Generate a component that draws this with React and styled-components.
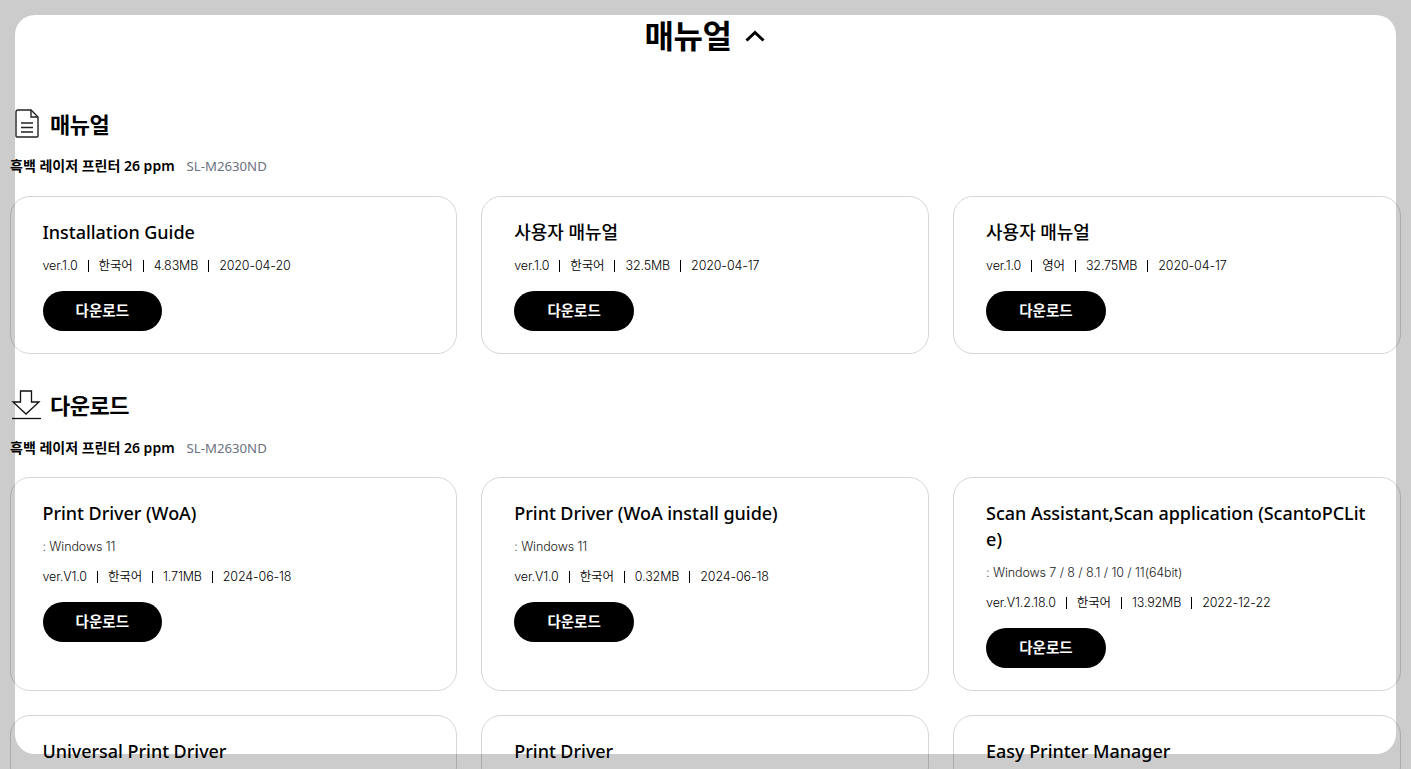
import React from "react";
import styled, { createGlobalStyle } from "styled-components";

const FONT = `"Noto Sans", "Noto Sans CJK KR", sans-serif`;
const LIGHT_FONT = `Inter, "Noto Sans CJK KR", sans-serif`;

const GlobalStyle = createGlobalStyle`
  html, body {
    margin: 0;
    height: 769px;
    overflow: hidden;
    background-color: #cccccc;
    font-family: ${FONT};
    color: #000;
  }
`;

// styled elements
const Panel = styled.div`
  height: 739px;
  margin: 15px;
  background-color: #fff;
  border-radius: 20px;
`;
const PageTitle = styled.h1`
  height: 42px;
  margin: 0;
  padding-right: 2px;
  display: flex;
  justify-content: center;
  align-items: center;
  gap: 13px;
  font-size: 32px;
  line-height: 42px;
  font-weight: 700;
  letter-spacing: -0.4px;
`;
const Content = styled.div`
  margin: 52px -4.9px 0 -5.5px;
`;
const Section = styled.section`
  margin-bottom: 36.3px;
`;
const SectionHead = styled.div`
  height: 30px;
  display: flex;
  align-items: center;
  gap: 9px;
  padding-left: 1.5px;
`;
const IconBox = styled.span`
  width: 30px;
  height: 30px;
  display: flex;
  justify-content: center;
  padding-left: ${(p) => p.$shift || 0}px;
  box-sizing: border-box;
`;
const SectionTitle = styled.h2`
  margin: 0;
  font-size: 22px;
  line-height: 30px;
  font-weight: 700;
  letter-spacing: -0.5px;
`;
const ModelLine = styled.div`
  height: 20px;
  margin: 17.3px 0 19.7px 0.5px;
  display: flex;
  align-items: center;
  gap: 12px;
  font-size: 14px;
  line-height: 20px;
`;
const ModelName = styled.strong`
  font-weight: 600;
`;
const ModelCode = styled.span`
  font-size: 13.2px;
  color: #6c7280;
`;
const CardGrid = styled.div`
  display: grid;
  grid-template-columns: repeat(3, 1fr);
  gap: 24px;
`;
const Card = styled.div`
  padding: 22px 32px;
  border: 1px solid rgba(0, 0, 0, 0.16);
  border-radius: 20px;
`;
const CardTitle = styled.h3`
  margin: 0;
  font-size: 18px;
  line-height: 26px;
  font-weight: 500;
  letter-spacing: -0.04px;
  word-break: break-all;
`;
const OsLine = styled.p`
  height: 20px;
  margin: 10px 0 0 0;
  font-family: ${LIGHT_FONT};
  font-size: 12.5px;
  font-weight: 350;
  line-height: 22px;
  letter-spacing: -0.1px;
  color: #222;
`;
const MetaRow = styled.ul`
  height: 20px;
  box-sizing: border-box;
  margin: 10px 0 0 0;
  padding: 1.6px 0 0 0;
  list-style: none;
  display: flex;
  align-items: center;
  font-family: ${LIGHT_FONT};
  font-size: 12.5px;
  font-weight: 350;
  line-height: 18px;
  letter-spacing: -0.13px;
`;
const MetaItem = styled.li`
  display: flex;
  align-items: center;

  & + &::before {
    content: "";
    width: 1px;
    height: 12px;
    margin: 0 10px;
    background-color: #000;
  }
`;
const DownloadButton = styled.button`
  display: block;
  width: 119.6px;
  height: 40px;
  margin-top: 16px;
  padding: 0 0 3px 0;
  border: 0;
  border-radius: 20px;
  background-color: #000;
  color: #fff;
  font-family: ${FONT};
  font-size: 14.5px;
  font-weight: 700;
`;

const manuals = [
  { title: "Installation Guide", meta: ["ver.1.0", "한국어", "4.83MB", "2020-04-20"] },
  { title: "사용자 매뉴얼", meta: ["ver.1.0", "한국어", "32.5MB", "2020-04-17"] },
  { title: "사용자 매뉴얼", meta: ["ver.1.0", "영어", "32.75MB", "2020-04-17"] },
];

const downloads = [
  { title: "Print Driver (WoA)", os: ": Windows 11", meta: ["ver.V1.0", "한국어", "1.71MB", "2024-06-18"] },
  { title: "Print Driver (WoA install guide)", os: ": Windows 11", meta: ["ver.V1.0", "한국어", "0.32MB", "2024-06-18"] },
  {
    title: "Scan Assistant,Scan application (ScantoPCLite)",
    os: ": Windows 7 / 8 / 8.1 / 10 / 11(64bit)",
    meta: ["ver.V1.2.18.0", "한국어", "13.92MB", "2022-12-22"],
  },
  { title: "Universal Print Driver" },
  { title: "Print Driver" },
  { title: "Easy Printer Manager" },
];

function ChevronUp() {
  return (
    <svg width="20" height="12" viewBox="0 0 20 12" fill="none" stroke="#000" strokeWidth="3">
      <polyline points="1.5,10.5 10,2.5 18.5,10.5" />
    </svg>
  );
}

function DocIcon() {
  return (
    <svg width="24" height="29" viewBox="0 0 24 29" fill="none" stroke="#222" strokeWidth="1.4">
      <path d="M3 1h13l7 7v19a1 1 0 0 1-1 1H2a1 1 0 0 1-1-1V3a2 2 0 0 1 2-2z" />
      <path d="M16 1v7h7" />
      <path d="M6 14h12M6 18.500h12M6 23h12" />
    </svg>
  );
}

function DownloadIcon() {
  return (
    <svg width="30" height="30" viewBox="0 0 30 30" fill="none" stroke="#111" strokeWidth="1.3">
      <path d="M9.500 1h11v11h7.500L15 24 2 12h7.500z" />
      <path d="M1 28.500h29" />
    </svg>
  );
}

function FileCard({ item }) {
  return (
    <Card>
      <CardTitle>{item.title}</CardTitle>
      {item.os && <OsLine>{item.os}</OsLine>}
      {item.meta && (
        <MetaRow>
          {item.meta.map((m, i) => (
            <MetaItem key={i}>{m}</MetaItem>
          ))}
        </MetaRow>
      )}
      {item.meta && <DownloadButton>다운로드</DownloadButton>}
    </Card>
  );
}

function FileSection({ icon, shift, title, items }) {
  return (
    <Section>
      <SectionHead>
        <IconBox $shift={shift}>{icon}</IconBox>
        <SectionTitle>{title}</SectionTitle>
      </SectionHead>
      <ModelLine>
        <ModelName>흑백 레이저 프린터 26 ppm</ModelName>
        <ModelCode>SL-M2630ND</ModelCode>
      </ModelLine>
      <CardGrid>
        {items.map((item, i) => (
          <FileCard key={i} item={item} />
        ))}
      </CardGrid>
    </Section>
  );
}

function App() {
  return (
    <>
      <GlobalStyle />
      <Panel>
        <PageTitle>
          매뉴얼 <ChevronUp />
        </PageTitle>
        <Content>
          <FileSection icon={<DocIcon />} shift={2} title="매뉴얼" items={manuals} />
          <FileSection icon={<DownloadIcon />} title="다운로드" items={downloads} />
        </Content>
      </Panel>
    </>
  );
}

export default App;
